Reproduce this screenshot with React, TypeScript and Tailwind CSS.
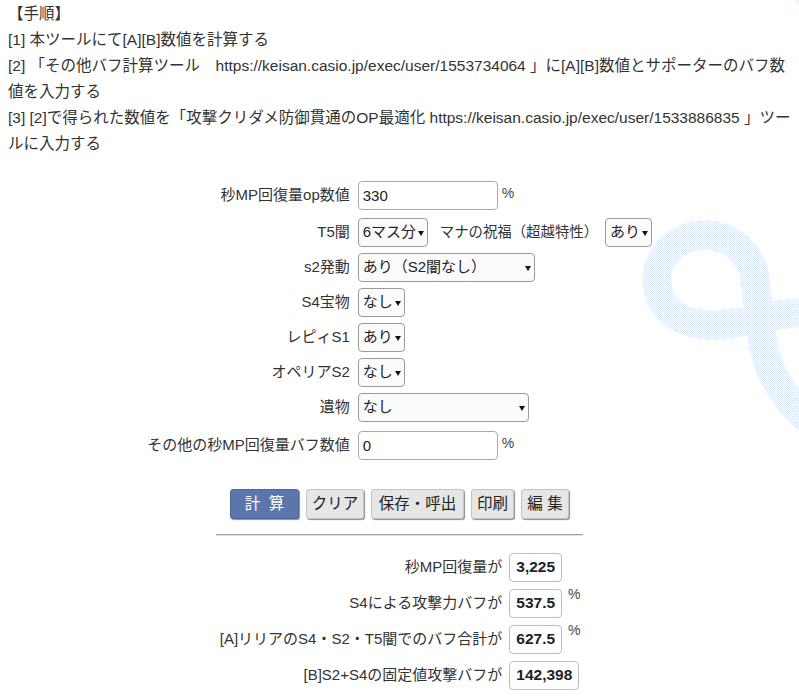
import React from "react";

const FONT = "font-['Liberation_Sans','Noto_Sans_CJK_JP',sans-serif]";

function Arrow() {
  return (
    <svg
      width="6"
      height="5"
      viewBox="0 0 6 5"
      className="pointer-events-none absolute right-[4px] top-[13px]"
    >
      <polygon points="0,0 6,0 3,5" fill="#111" />
    </svg>
  );
}

function Sel({ w, text }: { w: string; text: string }) {
  return (
    <div className={`relative h-[29px] shrink-0 ${w}`}>
      <select className="h-full w-full appearance-none rounded-[4px] border border-[#9a9a9a] bg-[#fbfbfb] pl-[4px] pr-[10px] text-[15px] text-[#222] outline-none">
        <option>{text}</option>
      </select>
      <Arrow />
    </div>
  );
}

function Inp({ value }: { value: string }) {
  return (
    <>
      <input
        readOnly
        value={value}
        className="h-[29px] w-[140px] rounded-[4px] border border-[#aaaaaa] bg-white px-[4px] text-[15px] text-[#222] outline-none"
      />
      <span className="ml-[4px] -translate-y-[2px] text-[14px] text-[#444]">%</span>
    </>
  );
}

function Label({ children }: { children: React.ReactNode }) {
  return <div className="flex items-center justify-end whitespace-nowrap">{children}</div>;
}

function Ctl({ children }: { children: React.ReactNode }) {
  return <div className="flex items-center">{children}</div>;
}

function Btn({
  w,
  children,
  primary,
}: {
  w: string;
  children: React.ReactNode;
  primary?: boolean;
}) {
  return (
    <button
      className={`flex h-[30px] items-center justify-center rounded-[3px] border text-[15.5px] shadow-[1px_1px_1px_rgba(0,0,0,0.45)] ${w} ${
        primary
          ? "border-[#4d679b] bg-[#5b76aa] text-white"
          : "border-[#c4c4c4] bg-[#e6e6e6] text-[#222]"
      }`}
    >
      {children}
    </button>
  );
}

function Box({ children }: { children: React.ReactNode }) {
  return (
    <div className="flex h-[29px] items-center rounded-[4px] border border-[#bdbdbd] bg-white px-[6px] text-[15.5px] font-bold text-[#222]">
      {children}
    </div>
  );
}

function Pct() {
  return <span className="ml-[6px] self-start mt-[1px] text-[14px] leading-[16px] text-[#444]">%</span>;
}

export default function App() {
  return (
    <div className={`relative min-h-[696px] overflow-hidden bg-white text-[#333] ${FONT}`}>
      <svg
        width="799"
        height="696"
        viewBox="0 0 799 696"
        className="pointer-events-none absolute left-0 top-0"
      >
        <defs>
          <pattern id="dots" width="2" height="2" patternUnits="userSpaceOnUse">
            <rect x="0" y="0" width="1" height="1" fill="#dde8fa" />
            <rect x="1" y="1" width="1" height="1" fill="#dde8fa" />
          </pattern>
        </defs>
        <path
          d="M 820 430 C 795 410, 772 385, 764 348 C 758 318, 757 292, 754 272 C 747 250, 728 235, 705 235 C 678 235, 657 255, 657 280 C 657 308, 680 325, 712 325 C 742 325, 770 312, 820 312"
          fill="none"
          stroke="url(#dots)"
          strokeWidth="29"
          strokeLinecap="round"
        />
        <circle cx="806" cy="-6" r="13" fill="url(#dots)" />
      </svg>

      <div className="relative">
        <div className="whitespace-nowrap px-2 pt-px text-[15.5px] leading-[26px]">
          <p>【手順】</p>
          <p>[1] 本ツールにて[A][B]数値を計算する</p>
          <p>
            [2] 「その他バフ計算ツール　https://keisan.casio.jp/exec/user/1553734064 」に[A][B]数値とサポーターのバフ数
            <br />
            値を入力する
          </p>
          <p>
            [3] [2]で得られた数値を「攻撃クリダメ防御貫通のOP最適化 https://keisan.casio.jp/exec/user/1533886835 」ツー
            <br />
            ルに入力する
          </p>
        </div>

        <div className="mt-[19px] flex justify-center">
          <div className="grid grid-cols-[auto_294px] grid-rows-[39px_35px_35px_35px_35px_35px_35px_41px] gap-x-[8px] text-[15px]">
            <Label>秒MP回復量op数値</Label>
            <Ctl>
              <Inp value="330" />
            </Ctl>

            <Label>T5闇</Label>
            <Ctl>
              <Sel w="w-[70px]" text="6マス分" />
              <span className="ml-[12px] whitespace-nowrap text-[14.4px]">マナの祝福（超越特性）</span>
              <div className="ml-[7px]">
                <Sel w="w-[47px]" text="あり" />
              </div>
            </Ctl>

            <Label>s2発動</Label>
            <Ctl>
              <Sel w="w-[177px]" text="あり（S2闇なし）" />
            </Ctl>

            <Label>S4宝物</Label>
            <Ctl>
              <Sel w="w-[47px]" text="なし" />
            </Ctl>

            <Label>レピィS1</Label>
            <Ctl>
              <Sel w="w-[47px]" text="あり" />
            </Ctl>

            <Label>オペリアS2</Label>
            <Ctl>
              <Sel w="w-[47px]" text="なし" />
            </Ctl>

            <Label>遺物</Label>
            <Ctl>
              <Sel w="w-[171px]" text="なし" />
            </Ctl>

            <Label>その他の秒MP回復量バフ数値</Label>
            <Ctl>
              <Inp value="0" />
            </Ctl>
          </div>
        </div>

        <div className="mt-[23px] flex justify-center gap-[7px]">
          <Btn w="w-[69px]" primary>
            計&nbsp;&nbsp;算
          </Btn>
          <Btn w="w-[58px]">クリア</Btn>
          <Btn w="w-[93px]">保存・呼出</Btn>
          <Btn w="w-[43px]">印刷</Btn>
          <Btn w="w-[48px]">編 集</Btn>
        </div>

        <div className="mx-auto mt-[15px] w-[367px] border-t border-b border-t-[#a3a3a3] border-b-[#e2e2e2]" />

        <div className="mt-[13px] flex justify-center">
          <div className="grid grid-cols-[auto_70px] auto-rows-[36px] gap-x-[7px] text-[15px]">
            <Label>秒MP回復量が</Label>
            <Ctl>
              <Box>3,225</Box>
            </Ctl>

            <Label>S4による攻撃力バフが</Label>
            <Ctl>
              <Box>537.5</Box>
              <Pct />
            </Ctl>

            <Label>[A]リリアのS4・S2・T5闇でのバフ合計が</Label>
            <Ctl>
              <Box>627.5</Box>
              <Pct />
            </Ctl>

            <Label>[B]S2+S4の固定値攻撃バフが</Label>
            <Ctl>
              <Box>142,398</Box>
            </Ctl>
          </div>
        </div>
      </div>
    </div>
  );
}
